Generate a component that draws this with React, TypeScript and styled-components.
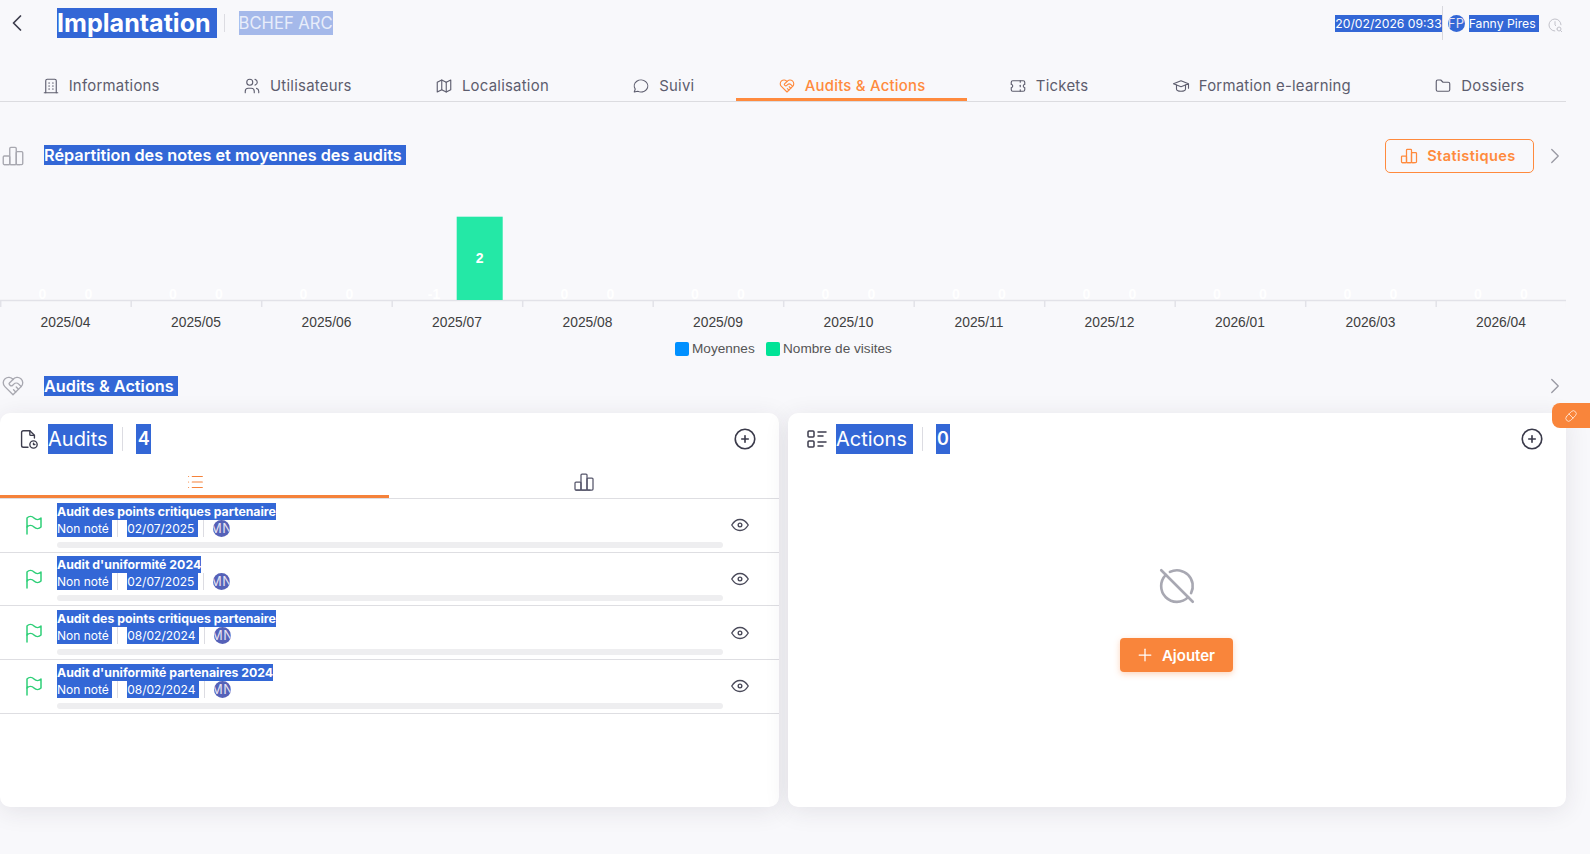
import React from "react";
import styled, { createGlobalStyle } from "styled-components";
import {
  TbBuilding,
  TbChartBar,
  TbChevronLeft,
  TbChevronRight,
  TbCircleOff,
  TbCirclePlus,
  TbClockSearch,
  TbEye,
  TbFlag,
  TbFolder,
  TbHeartHandshake,
  TbList,
  TbListDetails,
  TbMap,
  TbMessageCircle,
  TbPill,
  TbPlus,
  TbSchool,
  TbTicket,
  TbUsers,
} from "react-icons/tb";

const GlobalStyle = createGlobalStyle`
  html, body {
    margin: 0;
    padding: 0;
    background: #f8f8fb;
    font-family: Inter, "Noto Sans", sans-serif;
    overflow: hidden;
  }
  * { box-sizing: border-box; }
`;

const Page = styled.div`
  width: 1590px;
  height: 854px;
  padding-right: 24px;
  position: relative;
`;

const Selected = styled.span`
  display: inline-block;
  background: #3367d6;
  color: #fff;
  white-space: pre;
`;

const Header = styled.header`
  height: 46px;
  display: flex;
  align-items: center;
  color: #44445a;
`;

const BackButton = styled.div`
  width: 57px;
  padding-left: 3px;
  display: flex;
  align-items: center;
  color: #3d3d4d;
`;

const PageTitle = styled(Selected)`
  font-size: 25.1px;
  font-weight: 700;
  line-height: 30px;
`;

const TitleDivider = styled.div`
  width: 1px;
  height: 18px;
  margin: 0 14px 0 7px;
  background: #dcdce2;
`;

const SiteName = styled(Selected)`
  font-size: 16.6px;
  line-height: 24px;
  background: #a5b9ea;
  color: #e8edfa;
`;

const HeaderRight = styled.div`
  margin-left: auto;
  display: flex;
  align-items: center;
  margin-right: 3px;
`;

const HeaderDate = styled(Selected)`
  font-size: 12.2px;
  line-height: 17px;
`;

const HeaderDivider = styled.div`
  width: 1px;
  height: 34px;
  background: #d8d8de;
  margin-right: 5px;
`;

const Avatar = styled.div<{ $color: string }>`
  width: 17px;
  height: 17px;
  border-radius: 50%;
  overflow: hidden;
  background: ${(p) => p.$color};
  color: #e6e2f2;
  font-size: 13px;
  line-height: 17px;
  display: flex;
  justify-content: center;
  white-space: nowrap;
  letter-spacing: 0.5px;
  flex: none;
`;

const HeaderName = styled(Selected)`
  font-size: 12.2px;
  line-height: 17px;
  margin-left: 4px;
`;

const HistoryIcon = styled.div`
  display: flex;
  margin: 4px 0 0 8px;
  color: #c2c2ca;
`;

const Tabs = styled.nav`
  display: flex;
  margin-top: 27px;
  border-bottom: 1px solid #dcdce0;
`;

const Tab = styled.div<{ $active?: boolean }>`
  flex: 1 1 auto;
  height: 28px;
  display: flex;
  align-items: center;
  justify-content: center;
  gap: 9px;
  border-bottom: 3px solid ${(p) => (p.$active ? "#ff8a3d" : "transparent")};
  color: ${(p) => (p.$active ? "#ff8a3d" : "#5d5d6e")};
  font-size: 14.9px;
  font-weight: ${(p) => (p.$active ? 500 : 400)};
  letter-spacing: 0.25px;
  white-space: nowrap;
`;

const SectionHead = styled.div<{ $spaced?: boolean }>`
  display: flex;
  align-items: center;
  height: ${(p) => (p.$spaced ? "34px" : "20px")};
  margin-top: ${(p) => (p.$spaced ? "37px" : "0")};
  color: #a8a8b0;
`;

const SectionTitle = styled(Selected)<{ $raised?: boolean }>`
  font-size: 16.3px;
  font-weight: 600;
  line-height: 20px;
  margin-left: 18px;
  margin-bottom: ${(p) => (p.$raised ? "2px" : "0")};
`;

const StatsButton = styled.div`
  margin-left: auto;
  width: 149px;
  height: 34px;
  padding-right: 4px;
  display: flex;
  align-items: center;
  justify-content: center;
  gap: 8px;
  border: 1px solid #ff8a3d;
  border-radius: 5px;
  color: #ff8a3d;
  font-size: 14.6px;
  font-weight: 600;
  letter-spacing: 0.4px;
`;

const MoreLink = styled.div<{ $flush?: boolean }>`
  display: flex;
  margin-left: ${(p) => (p.$flush ? "auto" : "8px")};
  margin-right: -2px;
  color: #9a9aa4;
`;

const ChartSvg = styled.svg`
  display: block;
  width: 1566px;
  height: 203px;
  font-family: "Liberation Sans", Arial, sans-serif;
`;

const Cards = styled.div`
  display: grid;
  grid-template-columns: 779px 778px;
  gap: 9px;
  margin-top: 17px;
`;

const Card = styled.section`
  height: 394px;
  display: flex;
  flex-direction: column;
  background: #fff;
  border-radius: 10px;
  box-shadow: 0 4px 24px rgba(47, 43, 61, 0.1);
`;

const CardHead = styled.div`
  height: 52px;
  flex: none;
  display: flex;
  align-items: center;
  padding: 0 21px 0 17px;
  color: #3d3d4d;
`;

const CardIcon = styled.div`
  width: 31px;
  display: flex;
  flex: none;
`;

const CardTitle = styled(Selected)`
  font-size: 20px;
  line-height: 30px;
`;

const CardDivider = styled.div`
  width: 1px;
  height: 24px;
  background: #dcdce2;
  margin: 0 13px 0 9px;
`;

const CardCount = styled(Selected)`
  font-size: 18px;
  font-weight: 600;
  line-height: 30px;
  padding: 0 1.5px;
`;

const CardAdd = styled.div`
  margin-left: auto;
  display: flex;
  color: #3a3a4a;
`;

const SubTabs = styled.div`
  height: 34px;
  flex: none;
  display: grid;
  grid-template-columns: 389px 1fr;
  border-bottom: 1px solid #dedee2;
`;

const SubTab = styled.div<{ $active?: boolean }>`
  display: flex;
  align-items: center;
  justify-content: center;
  padding-top: 3px;
  border-bottom: 3px solid ${(p) => (p.$active ? "#f5823a" : "transparent")};
  color: ${(p) => (p.$active ? "#f5823a" : "#55556a")};
`;

const AuditRow = styled.div`
  height: 53.67px;
  display: flex;
  align-items: center;
  border-bottom: 1px solid #dedee2;
`;

const FlagSlot = styled.div`
  width: 57px;
  padding-left: 22px;
  display: flex;
  flex: none;
  color: #2fcf78;
`;

const AuditBody = styled.div`
  width: 666px;
  display: flex;
  flex-direction: column;
  align-items: flex-start;
`;

const AuditName = styled(Selected)`
  font-size: 12.3px;
  font-weight: 700;
  line-height: 17px;
`;

const AuditMeta = styled.div`
  display: flex;
  align-items: center;
  height: 17px;
`;

const MetaText = styled(Selected)`
  font-size: 12px;
  line-height: 17px;
`;

const MetaDivider = styled.div`
  width: 1px;
  height: 17px;
  background: #dcdce2;
  margin: 0 9px 0 5px;
`;

const ProgressTrack = styled.div`
  width: 100%;
  height: 6px;
  margin-top: 5px;
  border-radius: 3px;
  background: #eeeef0;
`;

const EyeSlot = styled.div`
  margin-left: 6px;
  display: flex;
  color: #4a4a5a;
`;

const EmptyState = styled.div`
  flex: 1;
  display: flex;
  flex-direction: column;
  align-items: center;
  justify-content: center;
  padding-bottom: 35px;
  color: #a8a8b2;
`;

const AddButton = styled.div`
  width: 113px;
  height: 34px;
  margin: 31px 1px 0 0;
  padding-right: 3px;
  display: flex;
  align-items: center;
  justify-content: center;
  gap: 7px;
  background: #f9853b;
  border-radius: 4px;
  box-shadow: 0 2px 6px rgba(249, 133, 59, 0.35);
  color: #fff;
  font-size: 15px;
  font-weight: 600;
`;

const FloatingTab = styled.div`
  position: absolute;
  top: 403px;
  right: 0;
  width: 38px;
  height: 25px;
  display: flex;
  align-items: center;
  justify-content: center;
  background: #f9853b;
  border-radius: 8px 0 0 8px;
  color: #ffe6d6;
`;

const tabs = [
  { label: "Informations", icon: TbBuilding },
  { label: "Utilisateurs", icon: TbUsers },
  { label: "Localisation", icon: TbMap },
  { label: "Suivi", icon: TbMessageCircle },
  { label: "Audits & Actions", icon: TbHeartHandshake, active: true },
  { label: "Tickets", icon: TbTicket },
  { label: "Formation e-learning", icon: TbSchool },
  { label: "Dossiers", icon: TbFolder },
];

const months = [
  "2025/04",
  "2025/05",
  "2025/06",
  "2025/07",
  "2025/08",
  "2025/09",
  "2025/10",
  "2025/11",
  "2025/12",
  "2026/01",
  "2026/03",
  "2026/04",
];

const audits = [
  { name: "Audit des points critiques partenaire", date: "02/07/2025" },
  { name: "Audit d'uniformité 2024", date: "02/07/2025" },
  { name: "Audit des points critiques partenaire", date: "08/02/2024" },
  { name: "Audit d'uniformité partenaires 2024", date: "08/02/2024" },
];

const BAND = 130.5;

const AuditFileIcon = () => (
  <svg width="22" height="22" viewBox="0 0 24 24" fill="none" stroke="currentColor" strokeWidth="1.5" strokeLinecap="round" strokeLinejoin="round">
    <path d="M14 3v4a1 1 0 0 0 1 1h4" />
    <path d="M12 21H7a2 2 0 0 1-2-2V5a2 2 0 0 1 2-2h7l5 5v3" />
    <circle cx="18" cy="18" r="4" />
    <path d="M18 16.5V18h1.5" />
  </svg>
);

const Chart = () => (
  <ChartSvg viewBox="0 173 1566 203">
    <line x1="0" x2="1566" y1="300.5" y2="300.5" stroke="#e2e2e8" strokeWidth="1.5" />
    {Array.from({ length: 13 }, (_, i) => (
      <line
        key={i}
        x1={i * BAND + 0.7}
        x2={i * BAND + 0.7}
        y1="300"
        y2="307"
        stroke="#e2e2e8"
        strokeWidth="1.5"
      />
    ))}
    <rect x="456.7" y="216.7" width="46" height="83.3" fill="#24e8a6" />
    <text x="479.7" y="263" fill="#fff" fontSize="14" fontWeight="700" textAnchor="middle">
      2
    </text>
    {months.map((month, i) => (
      <g key={month}>
        <text x={i * BAND + 42.5} y="299" fill="#fff" fontSize="14" fontWeight="700" textAnchor="middle">
          {i === 3 ? "-1" : "0"}
        </text>
        {i !== 3 && (
          <text x={i * BAND + 88.5} y="299" fill="#fff" fontSize="14" fontWeight="700" textAnchor="middle">
            0
          </text>
        )}
        <text x={i * BAND + 65.5} y="327" fill="#3f3f3f" fontSize="13.8" textAnchor="middle">
          {month}
        </text>
      </g>
    ))}
    <rect x="675" y="342" width="14" height="14" rx="2" fill="#0090ff" />
    <text x="692" y="353" fill="#555" fontSize="13.6">
      Moyennes
    </text>
    <rect x="766" y="342" width="14" height="14" rx="2" fill="#00e396" />
    <text x="783" y="353" fill="#555" fontSize="13.6">
      Nombre de visites
    </text>
  </ChartSvg>
);

export default function App() {
  return (
    <Page>
      <GlobalStyle />
      <Header>
        <BackButton>
          <TbChevronLeft size={28} strokeWidth={1.5} />
        </BackButton>
        <PageTitle>Implantation </PageTitle>
        <TitleDivider />
        <SiteName>BCHEF ARC</SiteName>
        <HeaderRight>
          <HeaderDate>20/02/2026 09:33</HeaderDate>
          <HeaderDivider />
          <Avatar $color="#3367d6">FP</Avatar>
          <HeaderName>Fanny Pires </HeaderName>
          <HistoryIcon>
            <TbClockSearch size={16} strokeWidth={1.5} />
          </HistoryIcon>
        </HeaderRight>
      </Header>

      <Tabs>
        {tabs.map(({ label, icon: Icon, active }) => (
          <Tab key={label} $active={active}>
            <Icon size={18} strokeWidth={1.5} />
            {label}
          </Tab>
        ))}
      </Tabs>

      <SectionHead $spaced>
        <TbChartBar size={26} strokeWidth={1.25} />
        <SectionTitle $raised>Répartition des notes et moyennes des audits </SectionTitle>
        <StatsButton>
          <TbChartBar size={20} strokeWidth={1.5} />
          Statistiques
        </StatsButton>
        <MoreLink>
          <TbChevronRight size={26} strokeWidth={1.25} />
        </MoreLink>
      </SectionHead>

      <Chart />

      <SectionHead>
        <TbHeartHandshake size={26} strokeWidth={1.25} />
        <SectionTitle>Audits & Actions </SectionTitle>
        <MoreLink $flush>
          <TbChevronRight size={26} strokeWidth={1.25} />
        </MoreLink>
      </SectionHead>

      <Cards>
        <Card>
          <CardHead>
            <CardIcon>
              <AuditFileIcon />
            </CardIcon>
            <CardTitle>Audits </CardTitle>
            <CardDivider />
            <CardCount>4</CardCount>
            <CardAdd>
              <TbCirclePlus size={26} strokeWidth={1.5} />
            </CardAdd>
          </CardHead>
          <SubTabs>
            <SubTab $active>
              <TbList size={22} strokeWidth={1.25} />
            </SubTab>
            <SubTab>
              <TbChartBar size={24} strokeWidth={1.25} />
            </SubTab>
          </SubTabs>
          {audits.map((audit, i) => (
            <AuditRow key={i}>
              <FlagSlot>
                <TbFlag size={24} strokeWidth={1.5} />
              </FlagSlot>
              <AuditBody>
                <AuditName>{audit.name}</AuditName>
                <AuditMeta>
                  <MetaText>Non noté </MetaText>
                  <MetaDivider />
                  <MetaText>{audit.date} </MetaText>
                  <MetaDivider />
                  <Avatar $color="#5561b8">MN</Avatar>
                </AuditMeta>
                <ProgressTrack />
              </AuditBody>
              <EyeSlot>
                <TbEye size={22} strokeWidth={1.5} />
              </EyeSlot>
            </AuditRow>
          ))}
        </Card>
        <Card>
          <CardHead>
            <CardIcon>
              <TbListDetails size={24} strokeWidth={1.5} />
            </CardIcon>
            <CardTitle>Actions </CardTitle>
            <CardDivider />
            <CardCount>0</CardCount>
            <CardAdd>
              <TbCirclePlus size={26} strokeWidth={1.5} />
            </CardAdd>
          </CardHead>
          <EmptyState>
            <TbCircleOff size={42} strokeWidth={1.5} />
            <AddButton>
              <TbPlus size={20} strokeWidth={1.5} />
              Ajouter
            </AddButton>
          </EmptyState>
        </Card>
      </Cards>

      <FloatingTab>
        <TbPill size={14} strokeWidth={1.5} />
      </FloatingTab>
    </Page>
  );
}
